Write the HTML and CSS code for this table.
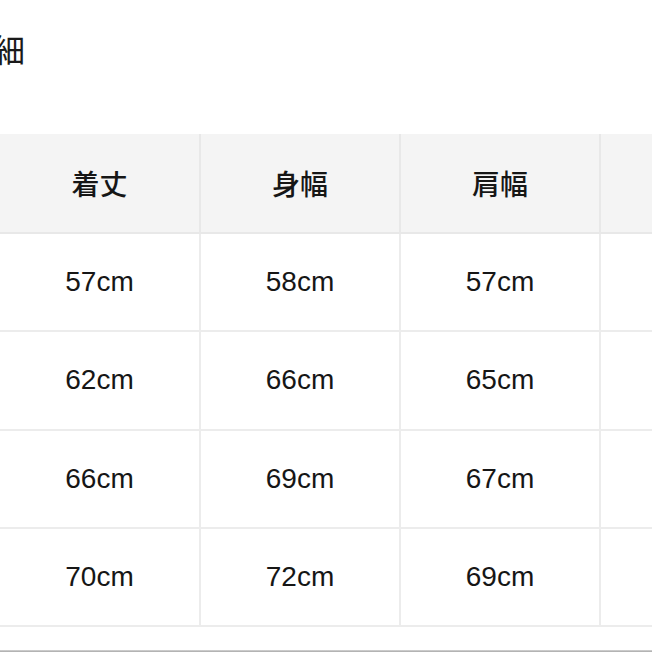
FILE: index.html
```html
<!DOCTYPE html>
<html lang="ja">
<head>
<meta charset="utf-8">
<title>サイズ詳細</title>
<link rel="stylesheet" href="styles.css">
</head>
<body>
<div class="page">
  <h2 class="title">詳細</h2>
  <table class="size-table">
    <thead>
      <tr>
        <th class="first">着丈</th>
        <th>身幅</th>
        <th>肩幅</th>
        <th></th>
      </tr>
    </thead>
    <tbody>
      <tr><td class="first">57cm</td><td>58cm</td><td>57cm</td><td></td></tr>
      <tr><td class="first">62cm</td><td>66cm</td><td>65cm</td><td></td></tr>
      <tr><td class="first">66cm</td><td>69cm</td><td>67cm</td><td></td></tr>
      <tr><td class="first">70cm</td><td>72cm</td><td>69cm</td><td></td></tr>
    </tbody>
  </table>
  <div class="bottom-line"></div>
</div>
</body>
</html>
```

FILE: styles.css
```css
html, body {
  margin: 0;
  padding: 0;
  background: #ffffff;
  overflow: hidden;
}

.page {
  width: 652px;
  height: 652px;
  position: relative;
  overflow: hidden;
  display: flex;
  flex-direction: column;
}

.title {
  margin: 32px 0 0 -39px;
  height: 32px;
  font-family: "Noto Sans CJK JP", "Noto Sans", sans-serif;
  font-size: 32px;
  line-height: 32px;
  font-weight: normal;
  color: #1a1a1a;
  white-space: nowrap;
}

.size-table {
  margin-top: 70px;
  border-collapse: separate;
  border-spacing: 0;
  table-layout: fixed;
  width: 797px;
  flex: none;
}

.size-table th,
.size-table td {
  width: 198px;
  padding: 0;
  text-align: center;
  vertical-align: middle;
  border-right: 2px solid #ececec;
  border-bottom: 2px solid #ececec;
  color: #161616;
}

.size-table .first {
  width: 199px;
}

.size-table th {
  height: 98px;
  background: #f4f4f4;
  font-family: "Noto Sans CJK JP", "Noto Sans", sans-serif;
  font-size: 28px;
  font-weight: 500;
  border-right-color: #e8e8e8;
  border-bottom-color: #e8e8e8;
}

.size-table td {
  height: 96.3px;
  background: #ffffff;
  font-family: "Liberation Sans", Arial, sans-serif;
  font-size: 28px;
}

.bottom-line {
  margin-top: auto;
  height: 2px;
  background: linear-gradient(#d6d6d6, #a8a8a8);
}
```
